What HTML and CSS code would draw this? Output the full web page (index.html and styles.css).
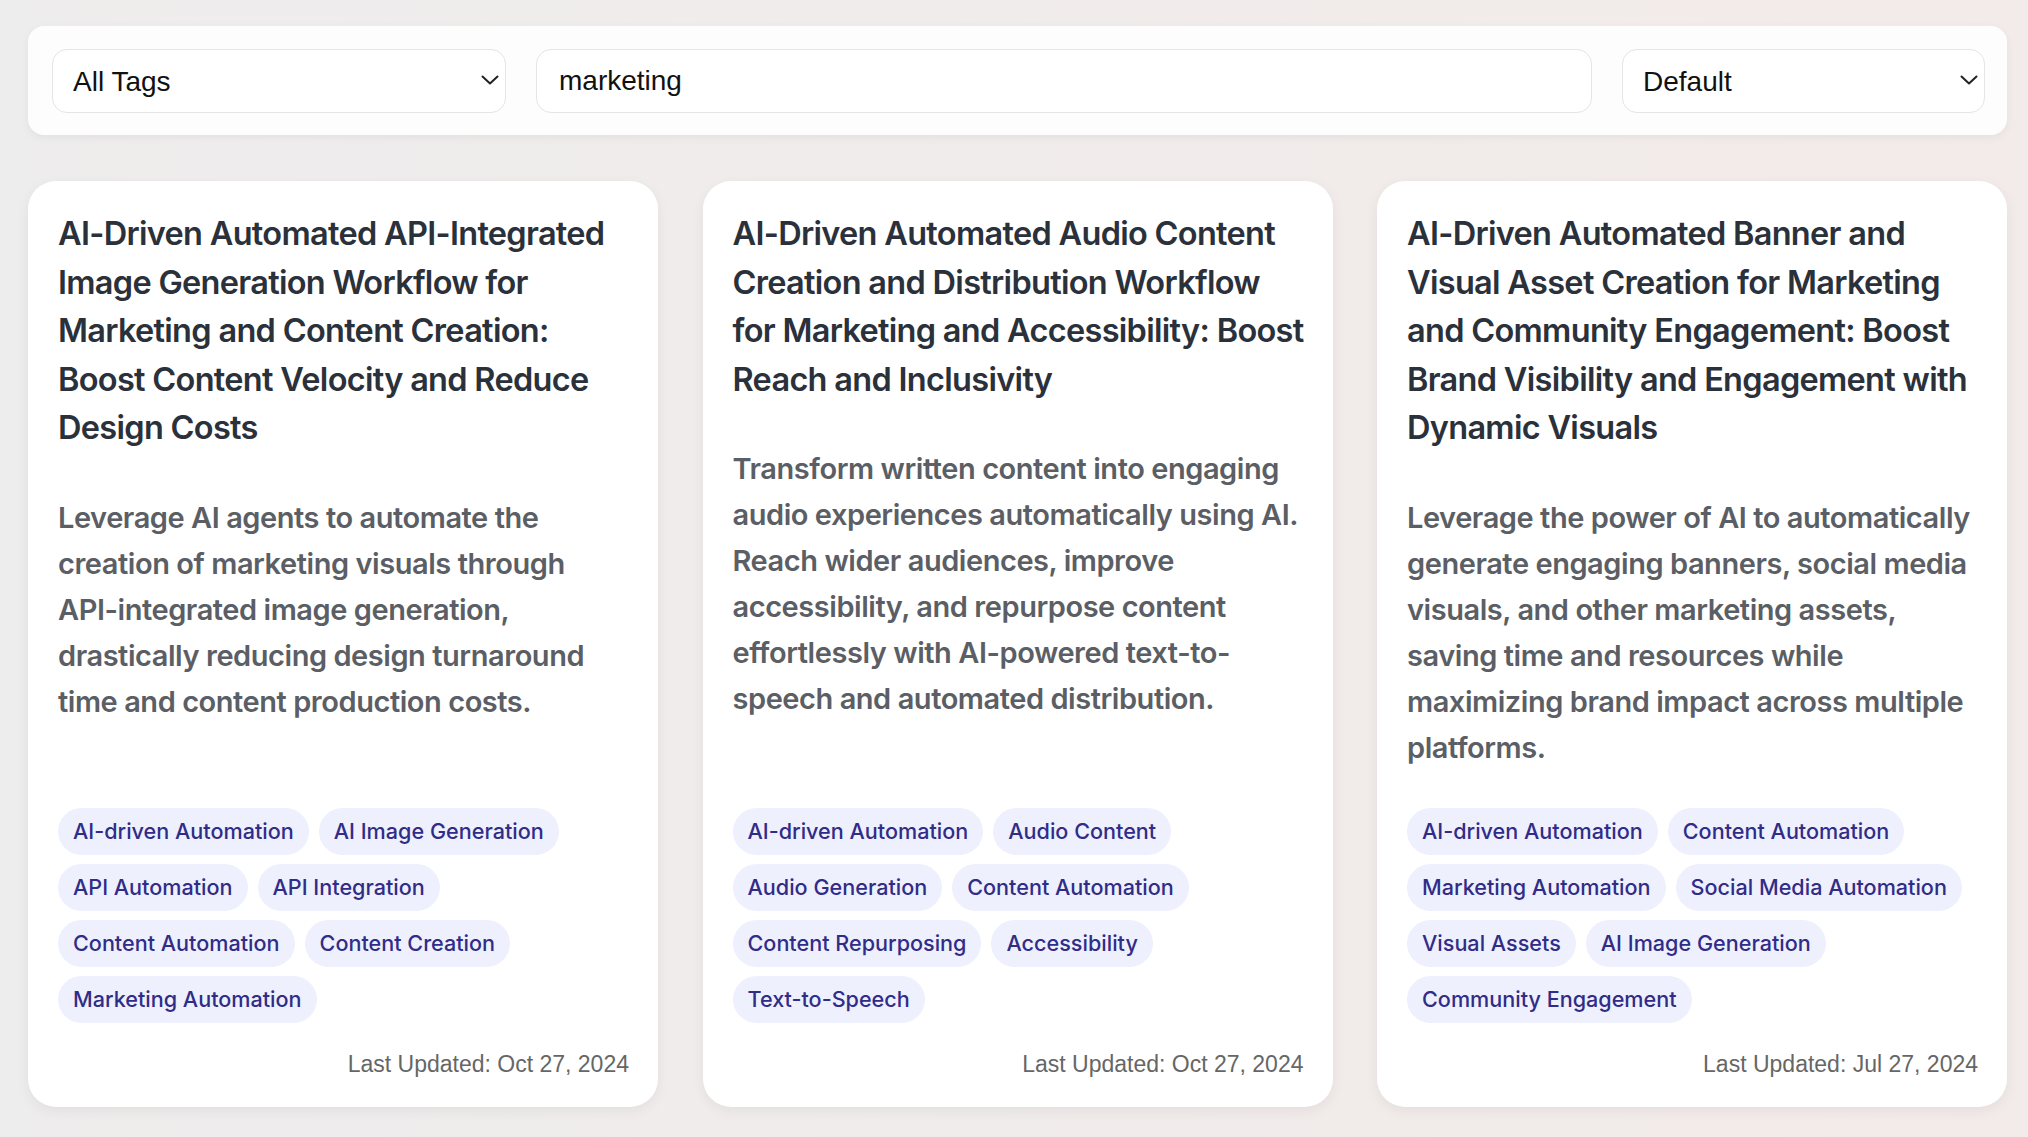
FILE: index.html
```html
<!DOCTYPE html>
<html lang="en">
<head>
<meta charset="utf-8">
<title>Workflows</title>
<link rel="stylesheet" href="styles.css">
</head>
<body>
<main class="page">
  <section class="filters">
    <div class="select-wrap select-tags">
      <select class="control select"><option>All Tags</option></select>
      <svg class="chev" viewBox="0 0 18 10" width="18" height="10"><path d="M1.5 1.5 L9 8.5 L16.5 1.5" fill="none" stroke="#222" stroke-width="2" stroke-linecap="round" stroke-linejoin="round"/></svg>
    </div>
    <input class="control search" type="text" value="marketing">
    <div class="select-wrap select-sort">
      <select class="control select"><option>Default</option></select>
      <svg class="chev" viewBox="0 0 18 10" width="18" height="10"><path d="M1.5 1.5 L9 8.5 L16.5 1.5" fill="none" stroke="#222" stroke-width="2" stroke-linecap="round" stroke-linejoin="round"/></svg>
    </div>
  </section>

  <section class="cards">
    <article class="card">
      <h2 class="title">AI-Driven Automated API-Integrated Image Generation Workflow for Marketing and Content Creation: Boost Content Velocity and Reduce Design Costs</h2>
      <p class="desc">Leverage AI agents to automate the creation of marketing visuals through API-integrated image generation, drastically reducing design turnaround time and content production costs.</p>
      <ul class="tags">
        <li class="tag">AI-driven Automation</li>
        <li class="tag">AI Image Generation</li>
        <li class="tag">API Automation</li>
        <li class="tag">API Integration</li>
        <li class="tag">Content Automation</li>
        <li class="tag">Content Creation</li>
        <li class="tag">Marketing Automation</li>
      </ul>
      <p class="updated">Last Updated: Oct 27, 2024</p>
    </article>

    <article class="card">
      <h2 class="title">AI-Driven Automated Audio Content Creation and Distribution Workflow for Marketing and Accessibility: Boost Reach and Inclusivity</h2>
      <p class="desc">Transform written content into engaging audio experiences automatically using AI. Reach wider audiences, improve accessibility, and repurpose content effortlessly with AI-powered text-to-speech and automated distribution.</p>
      <ul class="tags">
        <li class="tag">AI-driven Automation</li>
        <li class="tag">Audio Content</li>
        <li class="tag">Audio Generation</li>
        <li class="tag">Content Automation</li>
        <li class="tag">Content Repurposing</li>
        <li class="tag">Accessibility</li>
        <li class="tag">Text-to-Speech</li>
      </ul>
      <p class="updated">Last Updated: Oct 27, 2024</p>
    </article>

    <article class="card">
      <h2 class="title">AI-Driven Automated Banner and Visual Asset Creation for Marketing and Community Engagement: Boost Brand Visibility and Engagement with Dynamic Visuals</h2>
      <p class="desc">Leverage the power of AI to automatically generate engaging banners, social media visuals, and other marketing assets, saving time and resources while maximizing brand impact across multiple platforms.</p>
      <ul class="tags">
        <li class="tag">AI-driven Automation</li>
        <li class="tag">Content Automation</li>
        <li class="tag">Marketing Automation</li>
        <li class="tag">Social Media Automation</li>
        <li class="tag">Visual Assets</li>
        <li class="tag">AI Image Generation</li>
        <li class="tag">Community Engagement</li>
      </ul>
      <p class="updated">Last Updated: Jul 27, 2024</p>
    </article>
  </section>
</main>
</body>
</html>
```

FILE: styles.css
```css
* { box-sizing: border-box; }

html, body {
  margin: 0;
  padding: 0;
}

body {
  min-height: 1137px;
  background: linear-gradient(90deg, #eeeded 0%, #f0eceb 50%, #f3ebe9 100%);
  font-family: "Inter", "Noto Sans", sans-serif;
  overflow: hidden;
}

.page {
  padding: 26px 21px 0 28px;
}

.filters {
  display: flex;
  align-items: center;
  gap: 30px;
  background: #fdfdfe;
  border-radius: 16px;
  padding: 23px 22px 22px 24px;
  box-shadow: 0 3px 10px rgba(0, 0, 0, 0.05);
}

.select-wrap {
  position: relative;
  flex: none;
}

.select-tags { width: 454px; }
.select-sort { width: 363px; }

.control {
  display: block;
  width: 100%;
  height: 64px;
  border: 1px solid #e6e4e4;
  border-radius: 15px;
  background: #ffffff;
  font-family: "Liberation Sans", Arial, sans-serif;
  font-size: 28px;
  color: #111;
  padding: 0 20px;
  outline: none;
}

.select {
  appearance: none;
  -webkit-appearance: none;
}

.search {
  flex: 1;
  min-width: 0;
  padding-left: 22px;
}

.chev {
  position: absolute;
  right: 7px;
  top: 26px;
  width: 18px;
  height: 10px;
  pointer-events: none;
}

.cards {
  display: grid;
  grid-template-columns: repeat(3, 1fr);
  gap: 44.5px;
  margin-top: 46px;
}

.card {
  display: flex;
  flex-direction: column;
  background: #ffffff;
  border-radius: 28px;
  padding: 29px 29px 29px 30px;
  box-shadow: 0 4px 14px rgba(0, 0, 0, 0.06);
}

.title {
  margin: 0 0 42px;
  font-size: 32.5px;
  line-height: 48.5px;
  font-weight: 600;
  letter-spacing: -0.7px;
  color: #2b313b;
}

.desc {
  margin: 0 0 37.5px;
  font-size: 29px;
  line-height: 46px;
  font-weight: 600;
  letter-spacing: -0.45px;
  color: #5b5f65;
}

.tags {
  list-style: none;
  margin: auto 0 0;
  padding: 0;
  display: flex;
  flex-wrap: wrap;
  gap: 9.5px 10px;
}

.tag {
  height: 46.5px;
  display: flex;
  align-items: center;
  padding: 0 15px;
  border-radius: 999px;
  background: #eef0fd;
  color: #302c88;
  font-size: 21.6px;
  font-weight: 500;
}

.updated {
  margin: 27px 0 0;
  text-align: right;
  font-family: "Liberation Sans", Arial, sans-serif;
  font-size: 23px;
  line-height: 28px;
  color: #666666;
}
```
